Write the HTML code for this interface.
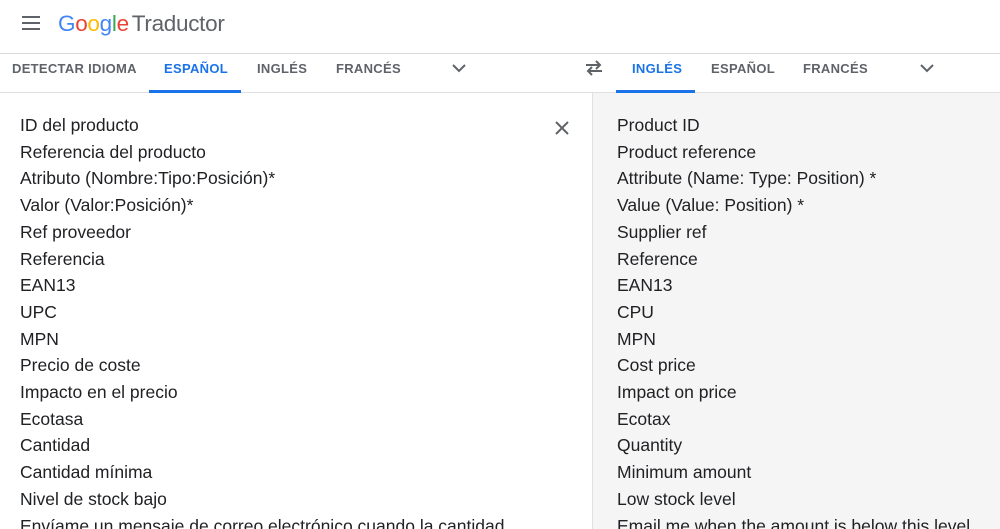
<!DOCTYPE html>
<html><head><meta charset="utf-8"><style>
*{margin:0;padding:0;box-sizing:border-box}
html,body{width:1000px;height:529px;overflow:hidden}
body{background:#fff;font-family:"Liberation Sans",Arial,sans-serif;position:relative}
.hdr{position:absolute;left:0;top:0;width:1000px;height:54px;border-bottom:1px solid #dadce0}
.logo{position:absolute;left:58px;top:11px;font-size:22.5px;letter-spacing:-0.3px}
.logo .t{color:#5f6368;margin-left:3px}
.tabs{position:absolute;left:0;top:54px;width:1000px;height:39px;border-bottom:1px solid #e0e0e0}
.tab{position:absolute;top:7px;font-size:13px;font-weight:bold;color:#5f6368;letter-spacing:0.3px}
.act{color:#1a73e8}
.ul{position:absolute;top:36px;height:3px;background:#1a73e8}
.right{position:absolute;left:592px;top:93px;width:408px;height:436px;background:#f5f5f5;border-left:1px solid #e0e0e0}
.col{position:absolute;top:112px;font-size:17.5px;color:#202124;line-height:26.7px;white-space:nowrap}
</style></head><body>
<div class="hdr">
<svg style="position:absolute;left:22px;top:16px" width="18" height="14"><rect y="0" width="18" height="2" fill="#5f6368"/><rect y="6" width="18" height="2" fill="#5f6368"/><rect y="12" width="18" height="2" fill="#5f6368"/></svg>
<div class="logo"><span style="color:#4285f4">G</span><span style="color:#ea4335">o</span><span style="color:#fbbc05">o</span><span style="color:#4285f4">g</span><span style="color:#34a853">l</span><span style="color:#ea4335">e</span><span class="t">Traductor</span></div>
</div>
<div class="tabs">
<span class="tab" style="left:12px">DETECTAR IDIOMA</span>
<span class="tab act" style="left:164px">ESPAÑOL</span>
<div class="ul" style="left:149px;width:92px"></div>
<span class="tab" style="left:257px">INGLÉS</span>
<span class="tab" style="left:336px">FRANCÉS</span>
<svg style="position:absolute;left:452px;top:9px" width="14" height="10"><path d="M1 2l6 6 6-6" fill="none" stroke="#5f6368" stroke-width="2"/></svg>
<svg style="position:absolute;left:584px;top:6px" width="20" height="16"><path d="M2 5h14M12 1l4 4-4 4M18 11H4M8 7l-4 4 4 4" fill="none" stroke="#5f6368" stroke-width="2"/></svg>
<span class="tab act" style="left:632px">INGLÉS</span>
<div class="ul" style="left:616px;width:79px"></div>
<span class="tab" style="left:711px">ESPAÑOL</span>
<span class="tab" style="left:803px">FRANCÉS</span>
<svg style="position:absolute;left:920px;top:9px" width="14" height="10"><path d="M1 2l6 6 6-6" fill="none" stroke="#5f6368" stroke-width="2"/></svg>
</div>
<div class="right"></div>
<svg style="position:absolute;left:555px;top:121px" width="14" height="14"><path d="M1 1l12 12M13 1L1 13" stroke="#5f6368" stroke-width="2"/></svg>
<div class="col" style="left:20px">ID del producto<br>Referencia del producto<br>Atributo (Nombre:Tipo:Posición)*<br>Valor (Valor:Posición)*<br>Ref proveedor<br>Referencia<br>EAN13<br>UPC<br>MPN<br>Precio de coste<br>Impacto en el precio<br>Ecotasa<br>Cantidad<br>Cantidad mínima<br>Nivel de stock bajo<br>Envíame un mensaje de correo electrónico cuando la cantidad</div>
<div class="col" style="left:617px">Product ID<br>Product reference<br>Attribute (Name: Type: Position) *<br>Value (Value: Position) *<br>Supplier ref<br>Reference<br>EAN13<br>CPU<br>MPN<br>Cost price<br>Impact on price<br>Ecotax<br>Quantity<br>Minimum amount<br>Low stock level<br>Email me when the amount is below this level</div>
</body></html>
